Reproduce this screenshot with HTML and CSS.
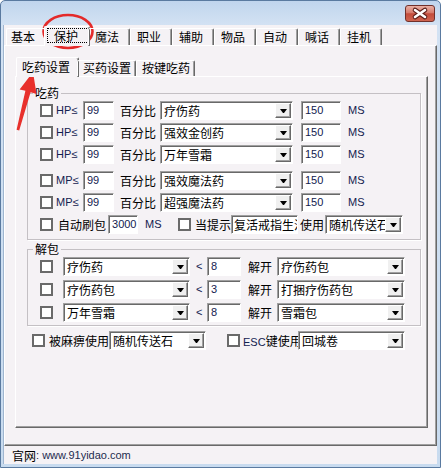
FILE: index.html
```html
<!DOCTYPE html>
<html lang="zh-CN">
<head>
    <meta charset="UTF-8">
    <meta name="viewport" content="width=device-width, initial-scale=1.0">
    <title>保护设置</title>
    <link rel="stylesheet" href="styles.css">
</head>
<body>
    <div class="window">
        <div class="titlebar">
            <button class="close-button" title="关闭">
                <svg width="28" height="15" viewBox="0 0 28 15">
                    <path d="M9 4 L19 11 M19 4 L9 11" stroke="#5a1c16" stroke-width="4.6" stroke-linecap="round"/>
                    <path d="M9 4 L19 11 M19 4 L9 11" stroke="#fff" stroke-width="2.6" stroke-linecap="round"/>
                </svg>
            </button>
        </div>

        <div class="client">
            <div class="tabs main-tabs">
                <div class="tab first">基本</div>
                <div class="tab active"><span class="focus">保护</span></div>
                <div class="tab">魔法</div>
                <div class="tab">职业</div>
                <div class="tab">辅助</div>
                <div class="tab">物品</div>
                <div class="tab">自动</div>
                <div class="tab">喊话</div>
                <div class="tab">挂机</div>
            </div>

            <div class="panel main-panel">
                <div class="tabs sub-tabs">
                    <div class="tab active">吃药设置</div>
                    <div class="tab">买药设置</div>
                    <div class="tab">按键吃药</div>
                </div>

                <div class="panel sub-panel">
                    <fieldset class="group potion-group">
                        <legend>吃药</legend>

                        <div class="row">
                            <input type="checkbox" class="check">
                            <span class="latin stat">HP≤</span>
                            <input type="text" class="field pct" value="99">
                            <span class="label pct-label">百分比</span>
                            <div class="combo item-combo"><span class="combo-text">疗伤药</span><span class="combo-button"><i class="arrow"></i></span></div>
                            <input type="text" class="field delay" value="150">
                            <span class="latin ms">MS</span>
                        </div>
                        <div class="row">
                            <input type="checkbox" class="check">
                            <span class="latin stat">HP≤</span>
                            <input type="text" class="field pct" value="99">
                            <span class="label pct-label">百分比</span>
                            <div class="combo item-combo"><span class="combo-text">强效金创药</span><span class="combo-button"><i class="arrow"></i></span></div>
                            <input type="text" class="field delay" value="150">
                            <span class="latin ms">MS</span>
                        </div>
                        <div class="row">
                            <input type="checkbox" class="check">
                            <span class="latin stat">HP≤</span>
                            <input type="text" class="field pct" value="99">
                            <span class="label pct-label">百分比</span>
                            <div class="combo item-combo"><span class="combo-text">万年雪霜</span><span class="combo-button"><i class="arrow"></i></span></div>
                            <input type="text" class="field delay" value="150">
                            <span class="latin ms">MS</span>
                        </div>
                        <div class="row spaced">
                            <input type="checkbox" class="check">
                            <span class="latin stat">MP≤</span>
                            <input type="text" class="field pct" value="99">
                            <span class="label pct-label">百分比</span>
                            <div class="combo item-combo"><span class="combo-text">强效魔法药</span><span class="combo-button"><i class="arrow"></i></span></div>
                            <input type="text" class="field delay" value="150">
                            <span class="latin ms">MS</span>
                        </div>
                        <div class="row">
                            <input type="checkbox" class="check">
                            <span class="latin stat">MP≤</span>
                            <input type="text" class="field pct" value="99">
                            <span class="label pct-label">百分比</span>
                            <div class="combo item-combo"><span class="combo-text">超强魔法药</span><span class="combo-button"><i class="arrow"></i></span></div>
                            <input type="text" class="field delay" value="150">
                            <span class="latin ms">MS</span>
                        </div>
                        <div class="row">
                            <input type="checkbox" class="check">
                            <span class="label refresh-label">自动刷包</span>
                            <input type="text" class="field refresh" value="3000">
                            <span class="latin ms short">MS</span>
                            <input type="checkbox" class="check notice-check">
                            <span class="label notice-label">当提示</span>
                            <input type="text" class="field cjk notice" value="复活戒指生活">
                            <span class="label use-label">使用</span>
                            <div class="combo notice-combo"><span class="combo-text">随机传送石</span><span class="combo-button"><i class="arrow"></i></span></div>
                        </div>
                    </fieldset>

                    <fieldset class="group unpack-group">
                        <legend>解包</legend>

                        <div class="row">
                            <input type="checkbox" class="check">
                            <div class="combo unpack-item"><span class="combo-text">疗伤药</span><span class="combo-button"><i class="arrow"></i></span></div>
                            <span class="latin lt">&lt;</span>
                            <input type="text" class="field count" value="8">
                            <span class="label open-label">解开</span>
                            <div class="combo unpack-pack"><span class="combo-text">疗伤药包</span><span class="combo-button"><i class="arrow"></i></span></div>
                        </div>
                        <div class="row">
                            <input type="checkbox" class="check">
                            <div class="combo unpack-item"><span class="combo-text">疗伤药包</span><span class="combo-button"><i class="arrow"></i></span></div>
                            <span class="latin lt">&lt;</span>
                            <input type="text" class="field count" value="3">
                            <span class="label open-label">解开</span>
                            <div class="combo unpack-pack"><span class="combo-text">打捆疗伤药包</span><span class="combo-button"><i class="arrow"></i></span></div>
                        </div>
                        <div class="row">
                            <input type="checkbox" class="check">
                            <div class="combo unpack-item"><span class="combo-text">万年雪霜</span><span class="combo-button"><i class="arrow"></i></span></div>
                            <span class="latin lt">&lt;</span>
                            <input type="text" class="field count" value="8">
                            <span class="label open-label">解开</span>
                            <div class="combo unpack-pack"><span class="combo-text">雪霜包</span><span class="combo-button"><i class="arrow"></i></span></div>
                        </div>
                    </fieldset>

                    <div class="row bottom-row">
                        <input type="checkbox" class="check">
                        <span class="label para-label">被麻痹使用</span>
                        <div class="combo para-combo"><span class="combo-text">随机传送石</span><span class="combo-button"><i class="arrow"></i></span></div>
                        <input type="checkbox" class="check esc-check">
                        <span class="label esc-label"><span class="latin">ESC</span>键使用</span>
                        <div class="combo esc-combo"><span class="combo-text">回城卷</span><span class="combo-button"><i class="arrow"></i></span></div>
                    </div>
                </div>
            </div>

            <div class="statusbar">
                <span>官网</span><span class="latin site">: www.91yidao.com</span>
            </div>
        </div>

        <!-- red marks drawn over the screenshot -->
        <svg class="marks" width="441" height="468" viewBox="0 0 441 468">
            <ellipse cx="68" cy="31.5" rx="24.5" ry="16.5" fill="none" stroke="#e42a2a" stroke-width="2.6"/>
            <polygon points="33,72 36.5,94 30.6,92.2 19.2,130.4 16.6,129.8 25.4,90.8 19.6,89.4" fill="#e8302c"/>
        </svg>
    </div>
</body>
</html>
```

FILE: styles.css
```css
body {
    margin: 0;
    font-family: "Noto Sans CJK SC", sans-serif;
    font-size: 12px;
    color: #000;
    background: #fff;
}

.window {
    position: relative;
    width: 441px;
    height: 468px;
    box-sizing: border-box;
    display: flex;
    flex-direction: column;
    padding: 0 3px 3px;
    border: 1px solid #5a7aa0;
    border-radius: 5px 5px 0 0;
    background: linear-gradient(#c0d5ed, #d3e2f3 24px, #c8dbef);
}

.titlebar {
    height: 24px;
    box-sizing: border-box;
    display: flex;
    justify-content: flex-end;
    align-items: flex-start;
    padding: 4px 2px 0 0;
}

.close-button {
    width: 30px;
    height: 17px;
    padding: 0;
    border: 1px solid #71302a;
    border-radius: 3px;
    background: linear-gradient(#eab0a4, #d67b6c 45%, #c34c3b 52%, #cf6450);
    display: flex;
    align-items: center;
    justify-content: center;
}

.client {
    flex: 1;
    display: flex;
    flex-direction: column;
    padding-top: 1px;
    background: #f5f2f5;
    border-left: 1px solid #9fb5cf;
    margin-left: -1px;
}

.latin {
    font-family: "Liberation Sans", Arial, sans-serif;
    font-size: 11px;
    color: #13214f;
}

/* tabs */
.tabs {
    display: flex;
    align-items: flex-end;
    position: relative;
    z-index: 1;
    height: 19px;
}

.main-tabs {
    padding-left: 2px;
}

.tab {
    box-sizing: border-box;
    flex: none;
    height: 17px;
    width: 42px;
    padding-left: 6px;
    line-height: 15px;
    white-space: nowrap;
    border: 1px solid #fff;
    border-right-color: #696969;
    border-bottom: none;
    border-radius: 2px 2px 0 0;
    box-shadow: inset -1px 0 #a0a0a0;
}

.tab.first {
    width: 40px;
    padding-left: 4px;
}

.tab.active {
    height: 20px;
    width: 46px;
    margin: 0 -2px -1px;
    padding-left: 2px;
    line-height: 17px;
    background: #f5f2f5;
}

.focus {
    display: inline-block;
    padding: 0 10px 0 6px;
    line-height: 13px;
    border: 1px dotted #000;
}

.sub-tabs {
    padding-left: 3px;
}

.sub-tabs .tab {
    width: 59px;
    height: 16px;
    padding-left: 5px;
    line-height: 14px;
}

.sub-tabs .tab.active {
    width: 63px;
    height: 20px;
    padding-left: 5px;
    line-height: 17px;
}

/* panels */
.panel {
    box-sizing: border-box;
    border: 1px solid #fff;
    border-right-color: #696969;
    border-bottom-color: #696969;
    box-shadow: inset -1px -1px #a0a0a0;
}

.main-panel {
    flex: 1;
    display: flex;
    flex-direction: column;
    padding: 11px 8px 17px 10px;
}

.sub-panel {
    flex: 1;
    padding-top: 0;
}

/* group boxes */
.group {
    margin: 0 6px 0 11px;
    padding: 0 0 5px 12px;
    min-width: 0;
    border: 1px solid #c4c0c4;
    box-shadow: 1px 1px #fff;
}

.group legend {
    margin-left: -7px;
    padding: 0 2px;
    line-height: 14px;
}

.potion-group {
    margin-top: 9px;
}

.unpack-group {
    margin-top: 2px;
    padding-bottom: 3px;
}

.row {
    display: flex;
    align-items: center;
    height: 20px;
    white-space: nowrap;
}

.potion-group .row + .row {
    margin-top: 2px;
}

.potion-group .row.spaced {
    margin-top: 6px;
}

.unpack-group .row + .row {
    margin-top: 3px;
}

.bottom-row {
    margin-top: 4px;
    padding-left: 16px;
}

/* controls */
.check {
    appearance: none;
    box-sizing: border-box;
    flex: none;
    width: 13px;
    height: 13px;
    margin: 0;
    border: 2px solid #6a6a6a;
    background: #fff;
}

.field {
    box-sizing: border-box;
    flex: none;
    height: 19px;
    margin: 0;
    padding: 0 0 0 3px;
    border: 1px solid;
    border-color: #a0a0a0 #fff #fff #a0a0a0;
    box-shadow: inset 1px 1px #696969;
    background: #fff;
    font-family: "Liberation Sans", Arial, sans-serif;
    font-size: 11px;
    color: #13214f;
    outline: none;
}

.field.cjk {
    font-family: "Noto Sans CJK SC", sans-serif;
    font-size: 12px;
    color: #000;
    padding-left: 2px;
}

.combo {
    box-sizing: border-box;
    flex: none;
    display: flex;
    height: 19px;
    padding: 1px;
    border: 1px solid;
    border-color: #a0a0a0 #fff #fff #a0a0a0;
    box-shadow: inset 1px 1px #696969;
    background: #fff;
}

.combo-text {
    flex: 1;
    overflow: hidden;
    padding-left: 2px;
    line-height: 15px;
}

.combo-button {
    box-sizing: border-box;
    flex: none;
    width: 16px;
    height: 15px;
    display: flex;
    align-items: center;
    justify-content: center;
    background: #f0f0f0;
    border: 1px solid;
    border-color: #fff #696969 #696969 #fff;
    box-shadow: inset -1px -1px #a0a0a0;
}

.arrow {
    width: 1px;
    height: 0;
    border-top: 4px solid #000;
    border-left: 3px solid transparent;
    border-right: 3px solid transparent;
    margin-top: 1px;
}

/* row pieces */
.stat {
    width: 27px;
    margin-left: 3px;
}

.pct {
    width: 31px;
}

.pct-label {
    margin-left: 6px;
    width: 36px;
}

.item-combo {
    margin-left: 4px;
    width: 133px;
}

.delay {
    margin-left: 8px;
    width: 40px;
}

.ms {
    margin-left: 7px;
}

.ms.short {
    width: 14px;
}

.refresh-label {
    margin-left: 5px;
}

.refresh {
    margin-left: 2px;
    width: 30px;
}

.notice-check {
    margin-left: 19px;
}

.notice-label {
    margin-left: 4px;
}

.notice {
    width: 67px;
}

.use-label {
    margin-left: 2px;
}

.notice-combo {
    margin-left: 1px;
    width: 78px;
}

.unpack-item {
    margin-left: 10px;
    width: 127px;
}

.lt {
    margin-left: 6px;
    width: 11px;
}

.count {
    width: 34px;
}

.open-label {
    margin-left: 7px;
}

.unpack-pack {
    margin-left: 5px;
    width: 128px;
}

.para-label {
    margin-left: 4px;
}

.para-combo {
    width: 97px;
}

.esc-check {
    margin-left: 21px;
}

.esc-label {
    margin-left: 3px;
    width: 55px;
}

.esc-combo {
    width: 107px;
}

/* status bar */
.statusbar {
    height: 18px;
    display: flex;
    align-items: center;
    padding-left: 8px;
}

.site {
    color: #1d2c4f;
}

.marks {
    position: absolute;
    top: -1px;
    left: -1px;
    pointer-events: none;
}
```
